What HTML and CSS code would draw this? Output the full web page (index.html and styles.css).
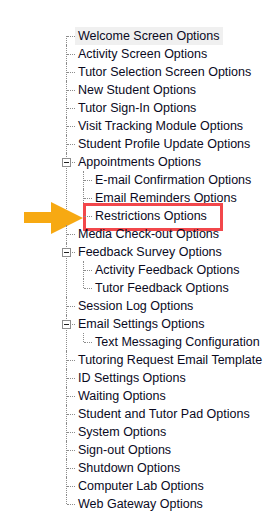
FILE: index.html
```html
<!DOCTYPE html>
<html lang="en">
<head>
    <meta charset="UTF-8">
    <meta name="viewport" content="width=device-width, initial-scale=1.0">
    <title>Options</title>
    <link rel="stylesheet" href="styles.css">
</head>
<body>
    <ul class="tree">
        <li><span class="label selected">Welcome Screen Options</span></li>
        <li><span class="label">Activity Screen Options</span></li>
        <li><span class="label">Tutor Selection Screen Options</span></li>
        <li><span class="label">New Student Options</span></li>
        <li><span class="label">Tutor Sign-In Options</span></li>
        <li><span class="label">Visit Tracking Module Options</span></li>
        <li><span class="label">Student Profile Update Options</span></li>
        <li class="open">
            <span class="toggle"></span><span class="label">Appointments Options</span>
            <ul>
                <li><span class="label">E-mail Confirmation Options</span></li>
                <li><span class="label">Email Reminders Options</span></li>
                <li>
                    <span class="label marked">Restrictions Options
                        <svg class="arrow" width="59" height="32" viewBox="0 0 59 32">
                            <path d="M0 10 H27 V0 L59 16 L27 32 V21 H0 Z" fill="#f7a912"/>
                        </svg>
                    </span>
                </li>
            </ul>
        </li>
        <li><span class="label">Media Check-out Options</span></li>
        <li class="open">
            <span class="toggle"></span><span class="label">Feedback Survey Options</span>
            <ul>
                <li><span class="label">Activity Feedback Options</span></li>
                <li><span class="label">Tutor Feedback Options</span></li>
            </ul>
        </li>
        <li><span class="label">Session Log Options</span></li>
        <li class="open">
            <span class="toggle"></span><span class="label">Email Settings Options</span>
            <ul>
                <li><span class="label">Text Messaging Configuration</span></li>
            </ul>
        </li>
        <li><span class="label">Tutoring Request Email Template</span></li>
        <li><span class="label">ID Settings Options</span></li>
        <li><span class="label">Waiting Options</span></li>
        <li><span class="label">Student and Tutor Pad Options</span></li>
        <li><span class="label">System Options</span></li>
        <li><span class="label">Sign-out Options</span></li>
        <li><span class="label">Shutdown Options</span></li>
        <li><span class="label">Computer Lab Options</span></li>
        <li><span class="label">Web Gateway Options</span></li>
    </ul>
</body>
</html>
```
FILE: styles.css
```css
* {
    margin: 0;
    padding: 0;
    box-sizing: border-box;
}

body {
    background: #ffffff;
    font-family: 'Liberation Sans', Arial, sans-serif;
    font-size: 12.5px;
    color: #0a0a1e;
}

.tree {
    list-style: none;
    padding: 27px 0 0 66px;
}

.tree ul {
    list-style: none;
    padding-left: 8px;
}

.tree li {
    position: relative;
    padding-left: 9px;
    line-height: 18px;
}

/* vertical tree line */
.tree li::before {
    content: '';
    position: absolute;
    left: 0;
    top: 0;
    bottom: 0;
    border-left: 1px dotted #8c8c8c;
}

.tree > li:first-child::before {
    top: 9px;
}

.tree li:last-child::before {
    bottom: auto;
    height: 9px;
}

/* horizontal connector */
.tree li::after {
    content: '';
    position: absolute;
    left: 1px;
    top: 9px;
    width: 8px;
    border-top: 1px dotted #8c8c8c;
}

.label {
    display: inline-block;
    position: relative;
    padding: 0 3px;
    height: 18px;
    white-space: nowrap;
}

.label.selected {
    background: #f0f0f0;
}

.toggle {
    position: absolute;
    left: -4px;
    top: 5px;
    width: 9px;
    height: 9px;
    border: 1px solid #8d8d8d;
    background: #ffffff;
    z-index: 1;
}

.toggle::after {
    content: '';
    position: absolute;
    left: 1px;
    top: 3px;
    width: 5px;
    height: 1px;
    background: #202020;
}

.label.marked::after {
    content: '';
    position: absolute;
    left: -9px;
    top: -4px;
    width: 134px;
    height: 22px;
    border: 3px solid #f2474b;
}

.arrow {
    position: absolute;
    left: -68px;
    top: -5px;
}
```
